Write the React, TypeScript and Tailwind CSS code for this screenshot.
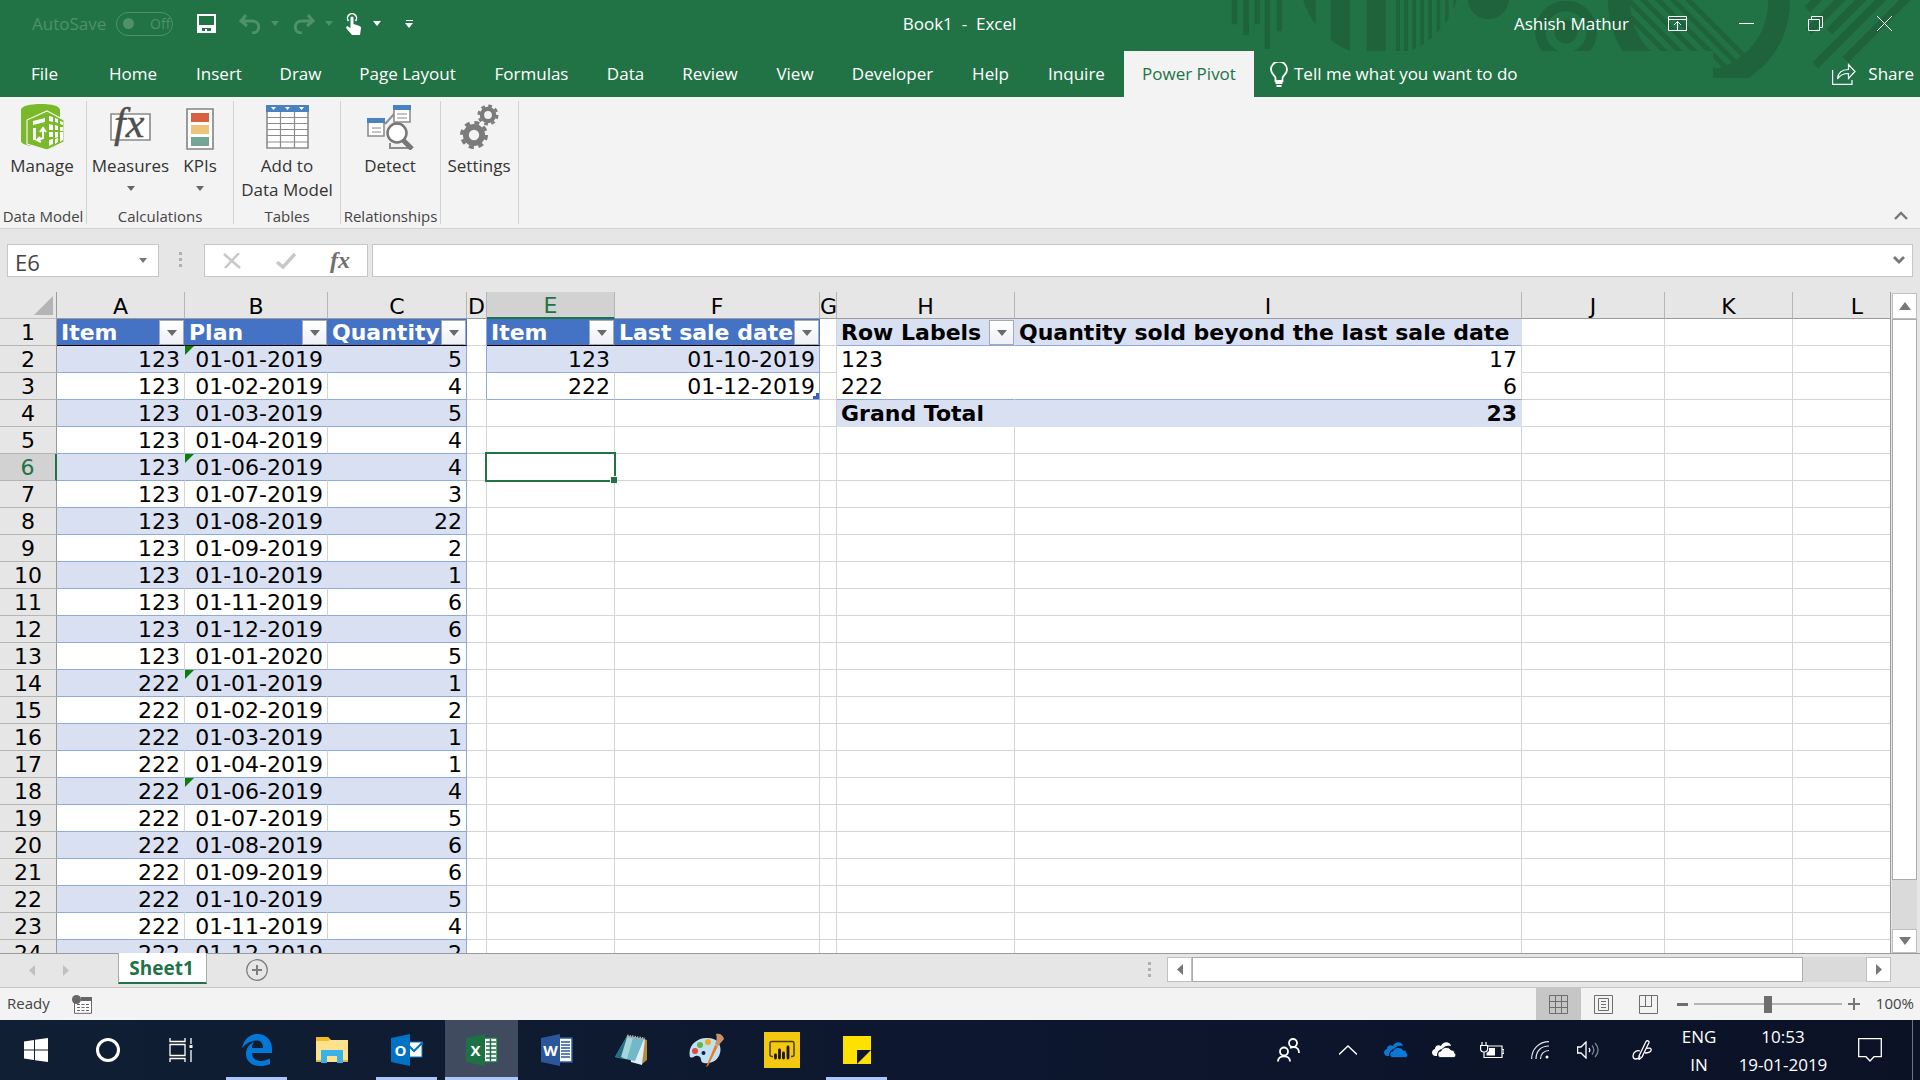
import { useState } from "react";
import type { ReactNode } from "react";
import clsx from "clsx";

const columns = [
  { name: "A", width: "w-[128px]" },
  { name: "B", width: "w-[143px]" },
  { name: "C", width: "w-[139px]" },
  { name: "D", width: "w-[20px]" },
  { name: "E", width: "w-[128px]" },
  { name: "F", width: "w-[205px]" },
  { name: "G", width: "w-[17px]" },
  { name: "H", width: "w-[178px]" },
  { name: "I", width: "w-[507px]" },
  { name: "J", width: "w-[143px]" },
  { name: "K", width: "w-[128px]" },
  { name: "L", width: "" },
];

const plan: [string, string, string][] = [
  ["123", "01-01-2019", "5"],
  ["123", "01-02-2019", "4"],
  ["123", "01-03-2019", "5"],
  ["123", "01-04-2019", "4"],
  ["123", "01-06-2019", "4"],
  ["123", "01-07-2019", "3"],
  ["123", "01-08-2019", "22"],
  ["123", "01-09-2019", "2"],
  ["123", "01-10-2019", "1"],
  ["123", "01-11-2019", "6"],
  ["123", "01-12-2019", "6"],
  ["123", "01-01-2020", "5"],
  ["222", "01-01-2019", "1"],
  ["222", "01-02-2019", "2"],
  ["222", "01-03-2019", "1"],
  ["222", "01-04-2019", "1"],
  ["222", "01-06-2019", "4"],
  ["222", "01-07-2019", "5"],
  ["222", "01-08-2019", "6"],
  ["222", "01-09-2019", "6"],
  ["222", "01-10-2019", "5"],
  ["222", "01-11-2019", "4"],
  ["222", "01-12-2019", "2"],
];

const cells: Record<string, string> = {
  A1: "Item",
  B1: "Plan",
  C1: "Quantity",
  E1: "Item",
  F1: "Last sale date",
  E2: "123",
  F2: "01-10-2019",
  E3: "222",
  F3: "01-12-2019",
  H1: "Row Labels",
  I1: "Quantity sold beyond the last sale date",
  H2: "123",
  I2: "17",
  H3: "222",
  I3: "6",
  H4: "Grand Total",
  I4: "23",
};

plan.forEach(([item, date, quantity], i) => {
  cells[`A${i + 2}`] = item;
  cells[`B${i + 2}`] = date;
  cells[`C${i + 2}`] = quantity;
});

const rows = Array.from({ length: 24 }, (_, i) => i + 1);
const filtered = ["A1", "B1", "C1", "E1", "F1", "H1"];
const flagged = ["B2", "B6", "B14", "B18"];

const tabs = [
  { name: "File", width: "w-[89px]" },
  { name: "Home", width: "w-[88px]" },
  { name: "Insert", width: "w-[84px]" },
  { name: "Draw", width: "w-[79px]" },
  { name: "Page Layout", width: "w-[135px]" },
  { name: "Formulas", width: "w-[113px]" },
  { name: "Data", width: "w-[75px]" },
  { name: "Review", width: "w-[94px]" },
  { name: "View", width: "w-[76px]" },
  { name: "Developer", width: "w-[119px]" },
  { name: "Help", width: "w-[77px]" },
  { name: "Inquire", width: "w-[95px]" },
  { name: "Power Pivot", width: "w-[130px]" },
];

function cellStyle(col: string, row: number) {
  const inPlan = "ABC".includes(col);
  const inSales = "EF".includes(col) && row <= 3;
  const inPivot = "HI".includes(col) && row <= 4;

  if (inPlan || inSales) {
    const last = col === "C" || col === "F";
    if (row === 1) {
      return "bg-[#4472c4] text-white font-bold border-b-black border-r-[#4472c4]";
    }
    if (row % 2 === 0) {
      return clsx(
        "bg-[#d9e0f2] border-b-[#8ea9db]",
        last ? "border-r-[#8ea9db]" : "border-r-[#d9e0f2]"
      );
    }
    return clsx(
      "bg-white border-b-[#8ea9db]",
      last ? "border-r-[#8ea9db]" : "border-r-[#d4d4d4]"
    );
  }
  if (inPivot) {
    if (row === 1) {
      return "bg-[#d9e0f2] font-bold border-b-[#8ea9db] border-r-[#d9e0f2]";
    }
    if (row === 4) {
      return "bg-[#d9e0f2] font-bold border-b-[#d9e0f2] border-r-[#d9e0f2]";
    }
    return clsx(
      "bg-white",
      row === 3 ? "border-b-[#8ea9db]" : "border-b-white",
      col === "I" ? "border-r-[#d4d4d4]" : "border-r-white"
    );
  }
  if (col === "D" && row <= 3) {
    return "bg-white border-b-[#d4d4d4] border-r-[#8ea9db]";
  }
  return "bg-white border-b-[#d4d4d4] border-r-[#d4d4d4]";
}

function Caret({ className }: { className?: string }) {
  return (
    <svg viewBox="0 0 8 5" className={clsx("h-[5px] w-2 shrink-0", className)}>
      <path d="M0 0h8L4 5z" fill="currentColor" />
    </svg>
  );
}

function HeaderPattern() {
  return (
    <svg
      viewBox="0 0 2100 234"
      className="absolute top-0 right-0 h-[78px] w-[700px]"
      aria-hidden="true"
    >
      <defs>
        <clipPath id="band">
          <path d="M0 0H2100V234H1479V153H0z" />
        </clipPath>
        <clipPath id="disc">
          <circle cx="480" cy="-71" r="241" />
        </clipPath>
        <clipPath id="ringInside">
          <circle cx="1437" cy="5" r="240" />
        </clipPath>
      </defs>
      <g clipPath="url(#band)" fill="#1e633c">
        <path d="M35 0h17v73H35zM70 0h17v106H70zM104 0h16v73h-16zM134 0h16v147h-16zM170 0h16v94h-16z" />
        <g clipPath="url(#disc)">
          <path d="M230 0h57v180h-57zM332 0h58v180h-58zM440 0h57v180h-57zM528 0h12v180h-12zM552 0h12v180h-12zM577 0h11v180h-11zM601 0h11v180h-11zM625 0h11v180h-11zM650 0h11v180h-11zM675 0h11v180h-11zM700 0h11v180h-11z" />
        </g>
        <circle cx="805" cy="-5" r="62" />
        <circle cx="1038" cy="95" r="77" fill="none" stroke="#1e633c" strokeWidth="31" />
        <circle cx="1038" cy="95" r="35" />
        <circle cx="1437" cy="5" r="240" fill="none" stroke="#1e633c" strokeWidth="66" />
        <g clipPath="url(#ringInside)" stroke="#1e633c" strokeWidth="15">
          <path d="M1180 0L1400 220M1215 -10L1440 215M1250 -20L1490 220M1295 -20L1520 205M1340 -20L1560 200M1385 -20L1590 185" />
        </g>
        <g stroke="#1e633c" strokeWidth="24">
          <path d="M1762 28L1800 -10M1765 95L1870 -10M1828 95L1935 -12M1786 196L1992 -10M1876 179L2075 -20" />
        </g>
      </g>
    </svg>
  );
}

function TitleBar() {
  const [autoSave, setAutoSave] = useState(false);

  return (
    <div className="relative grid h-[51px] grid-cols-[1fr_auto_1fr] items-center pr-px pb-1 text-[17px] text-white">
      <div className="flex items-center pl-8">
        <label className="flex items-center gap-2 text-[#4f9169]">
          <span className="w-[76px]">AutoSave</span>
          <input
            type="checkbox"
            className="sr-only"
            checked={autoSave}
            onChange={() => setAutoSave(!autoSave)}
          />
          <span className="flex h-6 w-[57px] items-center gap-4 rounded-full border border-[#4f9169] pl-1.5 text-sm">
            <span className="h-[11px] w-[11px] rounded-full bg-[#4f9169]" />
            Off
          </span>
        </label>
        <button className="ml-6" aria-label="Save">
          <svg viewBox="0 0 19 19" className="h-[19px] w-[19px]">
            <path d="M1 1h17v17H1z" fill="none" stroke="#fff" strokeWidth="2" />
            <path d="M1 11h17v7h-4v-4H5v4H1z" fill="#fff" />
            <path d="M8 15h2v4H8z" fill="#fff" />
          </svg>
        </button>
        <button className="ml-[23px] text-[#4f9169]" aria-label="Undo">
          <svg viewBox="0 0 22 20" className="h-5 w-[22px]">
            <path d="M7 1L2 7l6 5M2 7h11c9 0 9 12 0 12" fill="none" stroke="currentColor" strokeWidth="3" />
          </svg>
        </button>
        <button className="ml-2.5 text-[#4f9169]" aria-label="Undo list">
          <Caret />
        </button>
        <button className="ml-3.5 text-[#4f9169]" aria-label="Redo">
          <svg viewBox="0 0 22 20" className="h-5 w-[22px]">
            <path d="M15 1l5 6-6 5M20 7H9c-9 0-9 12 0 12" fill="none" stroke="currentColor" strokeWidth="3" />
          </svg>
        </button>
        <button className="ml-2.5 text-[#4f9169]" aria-label="Redo list">
          <Caret />
        </button>
        <button className="ml-3" aria-label="Touch mode">
          <svg viewBox="0 0 16 22" className="h-[22px] w-4">
            <path d="M3.500 8a4.500 4.500 0 1 1 7 0" fill="none" stroke="#fff" strokeWidth="1.500" />
            <path d="M5.500 5a1.500 1.500 0 0 1 3 0v6l6 2c1 .5 1.500 1 1.500 2l-1 7H7L1 15l1-2 3.500 2z" fill="#fff" />
          </svg>
        </button>
        <button className="ml-3" aria-label="Touch mode list">
          <Caret />
        </button>
        <button className="ml-6 flex flex-col items-center gap-0.5" aria-label="Customize toolbar">
          <span className="h-px w-[7px] bg-white" />
          <Caret />
        </button>
      </div>
      <h1 className="whitespace-pre">Book1  -  Excel</h1>
      <div className="flex items-center justify-end">
        <span className="mr-3.5">Ashish Mathur</span>
        <button className="flex w-[69px] justify-center" aria-label="Ribbon display options">
          <svg viewBox="0 0 19 15" className="h-[15px] w-[19px]" fill="none" stroke="#fff">
            <path d="M.5.500h18v14H.5zM.5 3.500h18M9.500 14V5.500M6 9l3.500-3.500L13 9" />
          </svg>
        </button>
        <button className="flex w-[69px] justify-center" aria-label="Minimize">
          <span className="h-px w-[15px] bg-white" />
        </button>
        <button className="flex w-[69px] justify-center" aria-label="Restore">
          <svg viewBox="0 0 15 15" className="h-[15px] w-[15px]" fill="none" stroke="#fff">
            <path d="M.5 3.500h11v11H.5zM3.500 3.500v-3h11v11h-3" />
          </svg>
        </button>
        <button className="flex w-[69px] justify-center" aria-label="Close">
          <svg viewBox="0 0 15 15" className="h-[15px] w-[15px]" fill="none" stroke="#fff">
            <path d="M0 0l15 15M15 0L0 15" />
          </svg>
        </button>
      </div>
    </div>
  );
}

function TabStrip() {
  return (
    <div className="relative flex h-[46px] items-stretch text-[17px] text-white">
      {tabs.map((tab) => (
        <button
          key={tab.name}
          className={clsx(
            "shrink-0 whitespace-nowrap",
            tab.width,
            tab.name === "Power Pivot" && "bg-[#f3f3f3] text-[#217346]"
          )}
        >
          {tab.name}
        </button>
      ))}
      <button className="ml-4 flex items-center gap-1.5">
        <svg viewBox="0 0 18 25" className="h-[25px] w-[18px]" fill="none" stroke="#fff" strokeWidth="1.800">
          <path d="M5.500 19v-3c0-2-4.500-4-4.500-8.500a8 8 0 0 1 16 0C17 12 12.500 14 12.500 16v3zM5.500 21h7M6.500 24h5" />
        </svg>
        <span>Tell me what you want to do</span>
      </button>
      <button className="ml-auto flex items-center gap-3 pr-1.5">
        <svg viewBox="0 0 24 22" className="h-[22px] w-6" fill="none" stroke="#fff" strokeWidth="1.200">
          <path d="M.6 7v14.400H20V17M5.500 16C6 9.500 10 6.500 16.500 6.500V1.500L23 8.500l-6.500 7v-5C12 10.500 8 12 5.500 16z" />
        </svg>
        <span>Share</span>
      </button>
    </div>
  );
}

function ManageIcon() {
  return (
    <svg viewBox="0 0 43 46" className="h-[46px] w-[43px]">
      <path d="M0 6C0 2 9 0 20 0s19 2 19 6v9H0zM0 6h9v36C4 41 0 39 0 37z" fill="#7ab929" />
      <path d="M6 16L26 7l17 9v22L26 46 6 40z" fill="#7ab929" stroke="#f3f3f3" strokeWidth="1.200" />
      <path d="M28 12l4 1v5l-4-1zM34 14l3 1v4l-3-1zM39 17l3 1v3l-3-1zM28 20l4 1v5h-4zM34 21l3 1v4h-3zM39 23h3v4h-3zM28 28h4v5h-4zM34 28h3v5l-3 1zM39 28h3v5l-3 1zM28 36l4-1v5l-4 2zM34 35l3-1v4l-3 2zM39 34l3-1v3l-3 2z" fill="#fff" />
      <path d="M12 17l12-3v4l-12 3zM12 24h3v12h-3z" fill="#fff" />
      <path d="M22 25v9l-5 2M19 28l3-4 3 4M19 33l-3 3 4 2" fill="none" stroke="#fff" strokeWidth="2" />
    </svg>
  );
}

function MeasuresIcon() {
  return (
    <svg viewBox="0 0 44 46" className="h-[46px] w-11 overflow-visible">
      <path d="M2 10h39v26H2z" fill="#fff" stroke="#8a8a8a" strokeWidth="1.600" />
      <text x="5" y="33" fill="#4f4f4f" stroke="#4f4f4f" strokeWidth=".4" fontSize="42" fontStyle="italic" fontFamily="Liberation Serif, serif">
        fx
      </text>
    </svg>
  );
}

function KpiIcon() {
  return (
    <svg viewBox="0 0 28 46" className="h-[46px] w-7">
      <path d="M1 5h26v40H1z" fill="#fff" stroke="#828282" strokeWidth="1.600" />
      <path d="M5 9h18v9H5z" fill="#d9603f" />
      <path d="M5 21h18v9H5z" fill="#eec578" />
      <path d="M5 33h18v9H5z" fill="#74a595" />
    </svg>
  );
}

function TableIcon() {
  return (
    <svg viewBox="0 0 43 46" className="h-[46px] w-[43px]">
      <path d="M1 2h41v42H1z" fill="#fff" stroke="#8c8c8c" strokeWidth="1.600" />
      <path d="M1 13.500h41M1 19.500h41M1 25.500h41M1 31.500h41M1 38h41M14.500 8v36M28.500 8v36" stroke="#8c8c8c" strokeWidth="1.200" />
      <path d="M0 1h43v7H0z" fill="#4a82bf" />
      <path d="M5 3h5L7.500 6zM19 3h5l-2.500 3zM33 3h5l-2.500 3z" fill="#fff" />
    </svg>
  );
}

function DetectIcon() {
  return (
    <svg viewBox="0 0 47 46" className="h-[46px] w-[47px]">
      <path d="M18 20L28 9M23 39v5h20" fill="none" stroke="#8c8c8c" strokeWidth="2" />
      <path d="M27 2h16v16H27zM1 15h16v17H1z" fill="#fff" stroke="#8c8c8c" strokeWidth="1.600" />
      <path d="M26 1h18v5H26zM0 14h18v5H0z" fill="#4a82bf" />
      <path d="M30 10h10M30 14h10M5 24h9M5 28h9" stroke="#b0b0b0" strokeWidth="1.500" />
      <path d="M36 36l9 9" stroke="#777" strokeWidth="5" />
      <circle cx="30" cy="29" r="9.500" fill="#fff" stroke="#777" strokeWidth="2.500" />
    </svg>
  );
}

function Gear({ x, y, r }: { x: number; y: number; r: number }) {
  return (
    <g stroke="#7b7b7b" fill="none">
      <circle cx={x} cy={y} r={r * 0.58} strokeWidth={r * 0.42} />
      <circle cx={x} cy={y} r={r * 0.88} strokeWidth={r * 0.24} strokeDasharray={`${r * 0.36} ${r * 0.331}`} />
    </g>
  );
}

function RibbonGroup({
  caption,
  width,
  children,
}: {
  caption: string;
  width: string;
  children: ReactNode;
}) {
  return (
    <section className={clsx("flex shrink-0 flex-col border-r border-[#d2d2d2]", width)}>
      <div className="flex flex-1 items-start">{children}</div>
      <h2 className="h-4 text-center text-[15px] leading-4 whitespace-nowrap text-[#444]">{caption}</h2>
    </section>
  );
}

function RibbonButton({
  icon,
  label,
  width,
  menu,
}: {
  icon: ReactNode;
  label: string;
  width: string;
  menu?: boolean;
}) {
  return (
    <button className={clsx("flex flex-col items-center pt-[3px]", width)}>
      {icon}
      <span className="mt-1 text-[17px] leading-6 whitespace-pre-line text-[#333]">{label}</span>
      {menu && <Caret className="mt-2 text-[#666]" />}
    </button>
  );
}

function Ribbon() {
  return (
    <div className="relative flex h-[132px] border-b border-[#d2d2d2] bg-[#f3f3f3] py-1">
      <RibbonGroup caption="Data Model" width="w-[87px]">
        <RibbonButton icon={<ManageIcon />} label="Manage" width="w-[84px]" />
      </RibbonGroup>
      <RibbonGroup caption="Calculations" width="w-[147px]">
        <RibbonButton icon={<MeasuresIcon />} label="Measures" width="w-[87px]" menu />
        <RibbonButton icon={<KpiIcon />} label="KPIs" width="w-[52px]" menu />
      </RibbonGroup>
      <RibbonGroup caption="Tables" width="w-[107px]">
        <RibbonButton icon={<TableIcon />} label={"Add to\nData Model"} width="w-[106px]" />
      </RibbonGroup>
      <RibbonGroup caption="Relationships" width="w-[100px]">
        <RibbonButton icon={<DetectIcon />} label="Detect" width="w-[98px]" />
      </RibbonGroup>
      <RibbonGroup caption="" width="w-[78px]">
        <RibbonButton
          icon={
            <svg viewBox="0 0 40 46" className="h-[46px] w-10">
              <Gear x={15} y={31} r={14} />
              <Gear x={29} y={11} r={10.5} />
            </svg>
          }
          label="Settings"
          width="w-[76px]"
        />
      </RibbonGroup>
      <button className="mt-auto mr-3 mb-1 ml-auto" aria-label="Collapse the ribbon">
        <svg viewBox="0 0 14 9" className="h-[9px] w-3.5">
          <path d="M1 8l6-6 6 6" fill="none" stroke="#777" strokeWidth="2.400" />
        </svg>
      </button>
    </div>
  );
}

function FormulaBar() {
  return (
    <div className="flex h-[63px] shrink-0 items-start bg-[#e6e6e6] pt-[15px] pr-[7px] pl-[7px] text-[#444]">
      <div className="flex h-[33px] w-[152px] shrink-0 items-center border border-[#c6c6c6] bg-white pr-[11px]">
        <input
          aria-label="Name box"
          defaultValue="E6"
          className="min-w-0 flex-1 bg-transparent pt-0.5 pl-[7px] text-[22px] leading-7 outline-none"
        />
        <Caret className="text-[#777]" />
      </div>
      <span className="mt-2 ml-[20px] flex flex-col gap-[3px]">
        <span className="h-[3px] w-[3px] bg-[#b0b0b0]" />
        <span className="h-[3px] w-[3px] bg-[#b0b0b0]" />
        <span className="h-[3px] w-[3px] bg-[#b0b0b0]" />
      </span>
      <div className="ml-[22px] flex h-[33px] w-[164px] shrink-0 items-center justify-between border border-[#c6c6c6] bg-white pr-[17px] pl-[18px]">
        <button aria-label="Cancel">
          <svg viewBox="0 0 18 16" className="h-4 w-[18px]">
            <path d="M1 1l16 14M16 0L2 15" stroke="#c8c8c8" strokeWidth="2.500" />
          </svg>
        </button>
        <button aria-label="Enter">
          <svg viewBox="0 0 20 16" className="h-4 w-5">
            <path d="M1 9l6 5L19 1" fill="none" stroke="#c8c8c8" strokeWidth="3.500" />
          </svg>
        </button>
        <button
          aria-label="Insert function"
          className="pb-0.5 font-['Liberation_Serif',serif] text-2xl leading-7 font-bold text-[#707070] italic"
        >
          fx
        </button>
      </div>
      <div className="ml-1 flex h-[33px] flex-1 items-center border border-[#c6c6c6] bg-white pr-[7px]">
        <input aria-label="Formula" className="min-w-0 flex-1 bg-transparent px-2 text-[22px] leading-7 outline-none" />
        <button aria-label="Expand formula bar">
          <svg viewBox="0 0 12 9" className="h-[9px] w-3">
            <path d="M1 1l5 5 5-5" fill="none" stroke="#777" strokeWidth="2.800" />
          </svg>
        </button>
      </div>
    </div>
  );
}

function Cell({ col, row }: { col: string; row: number }) {
  const id = `${col}${row}`;
  const value = cells[id];
  const left = row === 1 || col === "H";

  return (
    <td
      className={clsx(
        "relative h-[27px] border-r border-b px-1 pt-0.5 leading-6 whitespace-nowrap",
        left ? "text-left" : "text-right",
        cellStyle(col, row)
      )}
    >
      {value}
      {filtered.includes(id) && (
        <button
          aria-label={`Filter ${value}`}
          className="absolute top-px right-0 flex h-[25px] w-[25px] items-center justify-center border border-[#a3abb8] bg-linear-to-b from-white to-[#eef0f4] text-[#6a6a6a]"
        >
          <svg viewBox="0 0 10 6" className="h-1.5 w-2.5">
            <path d="M0 0h10L5 6z" fill="currentColor" />
          </svg>
        </button>
      )}
      {flagged.includes(id) && (
        <svg viewBox="0 0 9 9" className="absolute top-0 left-0 h-[9px] w-[9px]">
          <path d="M0 0h9L0 9z" fill="#0a7d0a" />
        </svg>
      )}
      {id === "F3" && (
        <svg viewBox="0 0 6 6" className="absolute right-0 bottom-0 h-1.5 w-1.5">
          <path d="M3 0h3v6H0V3h3z" fill="#3f5db5" />
        </svg>
      )}
      {id === "E6" && (
        <span className="absolute -top-0.5 -right-0.5 -bottom-0.5 -left-0.5 z-10 border-2 border-[#217346]">
          <span className="absolute -right-[3px] -bottom-[3px] h-[7px] w-[7px] border-t border-l border-white bg-[#217346]" />
        </span>
      )}
    </td>
  );
}

function ScrollArrow({ flip }: { flip?: boolean }) {
  return (
    <svg viewBox="0 0 12 8" className={clsx("h-2 w-3", flip && "rotate-180")}>
      <path d="M0 0h12L6 8z" fill="currentColor" />
    </svg>
  );
}

function Sheet() {
  return (
    <div className="flex min-h-0 flex-1 bg-[#e6e6e6]">
      <div className="min-w-0 flex-1 overflow-hidden border-r border-[#9b9b9b]">
        <table className="w-[1922px] min-w-full table-fixed border-separate border-spacing-0 font-['DejaVu_Sans',Verdana,sans-serif] text-[22px] text-black">
          <colgroup>
            <col className="w-[57px]" />
            {columns.map((col) => (
              <col key={col.name} className={col.width} />
            ))}
          </colgroup>
          <thead>
            <tr>
              <th className="h-[27px] border-r border-b border-r-[#9b9b9b] border-b-[#c0c0c0] p-0">
                <svg viewBox="0 0 19 19" className="mt-px mr-[3px] ml-auto h-[19px] w-[19px]">
                  <path d="M19 0v19H0z" fill="#b4b4b4" />
                </svg>
              </th>
              {columns.map((col) => (
                <th
                  key={col.name}
                  className={clsx(
                    "h-[27px] overflow-hidden border-r p-0 text-center font-normal",
                    col.name === "E"
                      ? "border-b-2 border-r-[#b5b5b5] border-b-[#217346] bg-[#d2d2d2] pt-[3px] leading-[22px] text-[#217346]"
                      : "border-b border-r-[#b5b5b5] border-b-[#9b9b9b] pt-1 leading-[22px]"
                  )}
                >
                  {col.name}
                </th>
              ))}
            </tr>
          </thead>
          <tbody>
            {rows.map((row) => (
              <tr key={row}>
                <th
                  className={clsx(
                    "h-[27px] border-b border-b-[#b5b5b5] p-0 pt-0.5 text-center leading-6 font-normal",
                    row === 6
                      ? "border-r-2 border-r-[#217346] bg-[#d2d2d2] text-[#217346]"
                      : "border-r border-r-[#9b9b9b]"
                  )}
                >
                  {row}
                </th>
                {columns.map((col) => (
                  <Cell key={col.name} col={col.name} row={row} />
                ))}
              </tr>
            ))}
          </tbody>
        </table>
      </div>
      <div className="flex w-[29px] flex-col pt-px pr-[3px] pl-px">
        <button className="flex h-[26px] shrink-0 items-center justify-center border border-[#c0c0c0] bg-white text-[#777]" aria-label="Scroll up">
          <ScrollArrow flip />
        </button>
        <div className="flex flex-1 flex-col bg-[#dadada]">
          <div className="h-[92%] border border-[#ababab] bg-white" />
        </div>
        <button className="flex h-6 shrink-0 items-center justify-center border border-[#c0c0c0] bg-white text-[#777]" aria-label="Scroll down">
          <ScrollArrow />
        </button>
      </div>
    </div>
  );
}

function SideArrow({ flip, className }: { flip?: boolean; className?: string }) {
  return (
    <svg viewBox="0 0 6 11" className={clsx("h-[11px] w-1.5", flip && "rotate-180", className)}>
      <path d="M6 0v11L0 5.500z" fill="currentColor" />
    </svg>
  );
}

function SheetTabs() {
  return (
    <div className="flex h-[35px] shrink-0 items-start border-t border-b border-t-[#9b9b9b] border-b-[#c6c6c6] bg-[#e6e6e6]">
      <button className="mt-[11px] ml-[29px] text-[#c0c0c0]" aria-label="Previous sheet">
        <SideArrow />
      </button>
      <button className="mt-[11px] ml-7 text-[#c0c0c0]" aria-label="Next sheet">
        <SideArrow flip />
      </button>
      <button className="-mt-px ml-[49px] h-[31px] w-[89px] border-x border-b-2 border-x-[#ababab] border-b-[#217346] bg-white pr-0.5 text-[19px] leading-7 font-bold text-[#217346]">
        Sheet1
      </button>
      <button className="mt-[5px] ml-[39px]" aria-label="New sheet">
        <svg viewBox="0 0 22 22" className="h-[22px] w-[22px]" fill="none" stroke="#7d7d7d">
          <circle cx="11" cy="11" r="10.300" strokeWidth="1.200" />
          <path d="M11 6v10M6 11h10" strokeWidth="2" />
        </svg>
      </button>
      <div className="mt-[3px] mr-[29px] ml-auto flex h-[25px] w-[743px] items-center">
        <span className="mr-4 flex flex-col gap-[3px]">
          <span className="h-[3px] w-[3px] bg-[#b0b0b0]" />
          <span className="h-[3px] w-[3px] bg-[#b0b0b0]" />
          <span className="h-[3px] w-[3px] bg-[#b0b0b0]" />
        </span>
        <button className="flex h-[25px] w-[25px] items-center justify-center border border-[#c0c0c0] bg-white text-[#777]" aria-label="Scroll left">
          <SideArrow />
        </button>
        <div className="flex h-[25px] flex-1 bg-[#dadada]">
          <div className="w-[611px] border border-[#ababab] bg-white" />
        </div>
        <button className="flex h-[25px] w-[25px] items-center justify-center border border-[#c0c0c0] bg-white text-[#777]" aria-label="Scroll right">
          <SideArrow flip />
        </button>
      </div>
    </div>
  );
}

function StatusBar() {
  return (
    <div className="flex h-8 shrink-0 items-center bg-[#f3f3f3] pr-1.5 pl-[7px] text-[15px] text-[#444]">
      <span className="w-[65px] pb-0.5">Ready</span>
      <button aria-label="Record macro">
        <svg viewBox="0 0 20 19" className="h-[19px] w-5">
          <path d="M2.500 6v12.300h17V5" fill="#fff" stroke="#666" />
          <path d="M9 2h11v4H9z" fill="#666" />
          <circle cx="4.500" cy="4.500" r="4.500" fill="#666" />
          <path d="M5 9.500h12M5 12.500h12M5 15.500h12" stroke="#666" strokeDasharray="3 1.500" />
        </svg>
      </button>
      <div className="ml-auto flex h-full items-center">
        <button className="flex h-full w-[45px] items-center justify-center bg-[#c6c6c6]" aria-label="Normal view">
          <svg viewBox="0 0 19 19" className="h-[19px] w-[19px]" fill="none" stroke="#6e6e6e">
            <path d="M.5.500h18v18H.5zM6.500 0v19M12.500 0v19M0 6.500h19M0 12.500h19" />
          </svg>
        </button>
        <button className="flex h-full w-[45px] items-center justify-center" aria-label="Page layout view">
          <svg viewBox="0 0 19 19" className="h-[19px] w-[19px]" fill="none" stroke="#6e6e6e">
            <path d="M.5.500h18v18H.5zM4.500 3.500h10v12h-10zM7 6.500h5M7 9.500h5M7 12.500h5" />
          </svg>
        </button>
        <button className="flex h-full w-[45px] items-center justify-center" aria-label="Page break preview">
          <svg viewBox="0 0 19 19" className="h-[19px] w-[19px]" fill="none" stroke="#6e6e6e">
            <path d="M.5.500h18v18H.5zM6.500 0v11M12.500 0v11M0 11.500h13" />
          </svg>
        </button>
        <button className="ml-1.5 h-[3px] w-[11px] bg-[#6e6e6e]" aria-label="Zoom out" />
        <input
          type="range"
          aria-label="Zoom"
          min={10}
          max={190}
          defaultValue={100}
          className="mx-1.5 h-[17px] w-[148px] appearance-none bg-[linear-gradient(#b5b5b5,#b5b5b5)] bg-[length:100%_2px] bg-center bg-no-repeat [&::-webkit-slider-thumb]:h-[17px] [&::-webkit-slider-thumb]:w-2 [&::-webkit-slider-thumb]:appearance-none [&::-webkit-slider-thumb]:bg-[#6e6e6e]"
        />
        <button aria-label="Zoom in">
          <svg viewBox="0 0 12 12" className="h-3 w-3">
            <path d="M6 0v12M0 6h12" stroke="#777" strokeWidth="2" />
          </svg>
        </button>
        <span className="w-[54px] pb-0.5 text-right">100%</span>
      </div>
    </div>
  );
}

function OfficeIcon({ letter, color, children }: { letter: string; color: string; children: ReactNode }) {
  return (
    <svg viewBox="0 0 32 32" className="h-8 w-8">
      {children}
      <path d="M0 4L19 0v32L0 28z" fill={color} />
      <text x="9.500" y="21.500" fill="#fff" fontSize="15" fontWeight="700" textAnchor="middle" fontFamily="Open Sans, sans-serif">
        {letter}
      </text>
    </svg>
  );
}

const apps: { name: string; state?: "open" | "active"; icon: ReactNode }[] = [
  {
    name: "Edge",
    state: "open",
    icon: (
      <svg viewBox="0 0 30 32" className="h-8 w-[30px]">
        <path d="M0 14C2 5 8 0 15.500 0 25 0 30 7 30 15v4H10c0 6 5 8 9 8 3 0 6-1 9-2.500V30c-3 1.500-7 2-10 2C9 32 4 26.500 4 20c0-6 3.500-10 8-12-1.500 2-2 4-2 6h11c0-5-2-7.500-6.500-7.500C9 6.500 4 9.500 0 14z" fill="#0478d7" />
      </svg>
    ),
  },
  {
    name: "File Explorer",
    icon: (
      <svg viewBox="0 0 32 28" className="h-7 w-8">
        <path d="M0 1h12l3 3h17v22H0z" fill="#fde28d" />
        <path d="M0 1h12l2 3-2 1H0z" fill="#f5b921" />
        <path d="M5 14h22v13h-6v-7H11v7H5z" fill="#38b2e8" />
        <path d="M0 24h5v2H0zM27 24h5v2h-5z" fill="#e9b63c" />
      </svg>
    ),
  },
  {
    name: "Outlook",
    state: "open",
    icon: (
      <OfficeIcon letter="O" color="#0072c6">
        <path d="M17 8h14v15H17z" fill="#fff" stroke="#0072c6" />
        <path d="M18 12l5 5 9-9" fill="none" stroke="#0072c6" strokeWidth="2" />
      </OfficeIcon>
    ),
  },
  {
    name: "Excel",
    state: "active",
    icon: (
      <OfficeIcon letter="X" color="#1e7145">
        <path d="M17 4h14v24H17z" fill="#fff" stroke="#1e7145" strokeWidth="1.500" />
        <path d="M20 8h10M20 12h10M20 16h10M20 20h10M20 24h10M24.500 5v22" stroke="#1e7145" strokeWidth="1.500" />
      </OfficeIcon>
    ),
  },
  {
    name: "Word",
    icon: (
      <OfficeIcon letter="W" color="#2b579a">
        <path d="M17 4h14v24H17z" fill="#fff" stroke="#2b579a" strokeWidth="1.500" />
        <path d="M20 8h9M20 11h9M20 14h9M20 17h9M20 20h9M20 23h9" stroke="#2b579a" strokeWidth="1.300" />
      </OfficeIcon>
    ),
  },
  {
    name: "Notepad",
    icon: (
      <svg viewBox="0 0 34 32" className="h-8 w-[34px]">
        <path d="M29 5l3 1v20l-5 4z" fill="#b48a3c" />
        <path d="M12 2l18 3-3 26-11-3z" fill="#dfeef2" />
        <path d="M12 2l17 3-9 22L0 23z" fill="#72b8c6" />
        <path d="M12 2L0 23l8 2 4-14z" fill="#236e82" />
        <path d="M12 3l6 1-6 21-6-2z" fill="#a5d5dd" />
        <path d="M12 2l18 3" stroke="#aaa" strokeWidth="3" strokeDasharray="1.500 1" />
      </svg>
    ),
  },
  {
    name: "Paint",
    icon: (
      <svg viewBox="0 0 35 34" className="h-[34px] w-[35px]">
        <path d="M1 24C-2 12 9 4 19 5c10 0 14 8 12 15-2 8-9 11-16 10-5-1-1-6-6-7-4-1-4 3-8 1z" fill="#bfe0f5" />
        <circle cx="6" cy="18" r="3" fill="#e3483c" />
        <circle cx="11" cy="12" r="3" fill="#5fb944" />
        <circle cx="19" cy="9" r="3" fill="#f2a91e" />
        <circle cx="14.500" cy="20" r="2" fill="#12203a" />
        <path d="M26 12l3 1-10 20-2 1z" fill="#e87d1e" />
        <path d="M27 1c4-1 7 1 8 5l-6 7-3-2c2-4 2-7 1-10z" fill="#c79367" />
      </svg>
    ),
  },
  {
    name: "Power BI",
    icon: (
      <svg viewBox="0 0 36 36" className="h-9 w-9">
        <path d="M0 0h36v36H0z" fill="#f2c811" />
        <path d="M9 24.500H8a2 2 0 0 1-2-2v-11a2 2 0 0 1 2-2h20a2 2 0 0 1 2 2v11a2 2 0 0 1-2 2h-1" fill="none" stroke="#4d3f06" strokeWidth="1.500" />
        <path d="M11.500 26v-3M15.500 26v-8M19.500 26v-5M24 26V15" stroke="#1c1702" strokeWidth="2.800" strokeLinecap="round" />
      </svg>
    ),
  },
  {
    name: "Sticky Notes",
    state: "open",
    icon: (
      <svg viewBox="0 0 28 28" className="h-7 w-7">
        <path d="M0 0h28v28H0z" fill="#ffe100" />
        <path d="M14 28V14h14z" fill="#0d1830" />
      </svg>
    ),
  },
];

function TrayButton({ label, width, children }: { label: string; width: string; children: ReactNode }) {
  return (
    <button aria-label={label} className={clsx("flex h-full shrink-0 items-center justify-center", width)}>
      {children}
    </button>
  );
}

function Cloud({ className }: { className: string }) {
  return (
    <svg viewBox="0 0 24 16" className={clsx("h-4 w-6", className)} fill="currentColor">
      <path d="M5 14H3c-4-1-4-6 0-7 0-3 3-5 6-3 2-5 9-5 10 0-4-1-7 0-8 3-4 0-6 3-6 7z" />
      <path d="M8 15.500c-3-1-3-6 1-6.500 1-4 8-5 10-1 3 0 4 2 3.500 3 2 1 1.500 4-.5 4.500z" stroke="#0d1830" strokeWidth=".8" />
    </svg>
  );
}

function Taskbar() {
  return (
    <div className="flex h-[60px] shrink-0 items-stretch bg-linear-to-r from-[#101f33] via-[#0d172f] to-[#0b1226] text-[17px] text-white">
      <TrayButton label="Start" width="w-[72px]">
        <svg viewBox="0 0 24 24" className="h-6 w-6" fill="#fff">
          <path d="M0 3.500L10 2v9.500H0zM11 1.800L24 0v11.500H11zM0 12.500h10V22L0 20.500zM11 12.500h13V24l-13-1.800z" />
        </svg>
      </TrayButton>
      <TrayButton label="Cortana" width="w-[72px]">
        <span className="h-6 w-6 rounded-full border-3 border-white" />
      </TrayButton>
      <TrayButton label="Task view" width="w-[75px]">
        <svg viewBox="0 0 24 24" className="mr-0.5 h-6 w-6" fill="none" stroke="#fff" strokeWidth="1.300">
          <path d="M1 0v3.500h15V0M1 6.500h15v11H1zM1 24v-3.500h15V24M22 0v6M22 12v12" />
          <path d="M20.500 7h3v3h-3z" fill="#fff" stroke="none" />
        </svg>
      </TrayButton>
      {apps.map((app) => (
        <button
          key={app.name}
          aria-label={app.name}
          className="flex w-[75px] shrink-0 flex-col items-center"
        >
          <span
            className={clsx(
              "flex w-[73px] flex-1 items-center justify-center pt-[3px]",
              app.state === "active" && "bg-[#414b5f]"
            )}
          >
            {app.icon}
          </span>
          <span
            className={clsx(
              "h-[3px]",
              app.state === "active" && "w-[73px] bg-[#adc6fa]",
              app.state === "open" && "w-[61px] bg-[#adc6fa]"
            )}
          />
        </button>
      ))}
      <div className="ml-auto flex items-center">
        <TrayButton label="People" width="w-[69px]">
          <svg viewBox="0 0 24 24" className="mr-0.5 h-6 w-6" fill="none" stroke="#fff" strokeWidth="1.800">
            <circle cx="16" cy="5" r="4" />
            <circle cx="7" cy="13.500" r="4" />
            <path d="M1 23.500c0-7 12-7 12 0M13 10c4-2 9-1 9 5" />
          </svg>
        </TrayButton>
        <TrayButton label="Show hidden icons" width="w-12">
          <svg viewBox="0 0 18 10" className="h-2.5 w-[18px]" fill="none" stroke="#fff" strokeWidth="1.400">
            <path d="M0 9.500L9 1l9 8.500" />
          </svg>
        </TrayButton>
        <TrayButton label="OneDrive work" width="w-12">
          <Cloud className="text-[#0a78d6]" />
        </TrayButton>
        <TrayButton label="OneDrive personal" width="w-12">
          <Cloud className="text-white" />
        </TrayButton>
        <TrayButton label="Battery" width="w-12">
          <svg viewBox="0 0 24 17" className="h-[17px] w-6" fill="none" stroke="#fff" strokeWidth="1.200">
            <path d="M8 4h14v11.500H4v-5M22.500 7.500H24v4h-1.500M2 0v3M6 0v3M.6 3.500h7V7C7.500 9 5.500 10 4 10S.6 9 .6 7z" />
            <path d="M9 6h6v7.500H6.500V11L9 9z" fill="#fff" stroke="none" />
          </svg>
        </TrayButton>
        <TrayButton label="Network" width="w-12">
          <svg viewBox="0 0 18 18" className="h-[18px] w-[18px]" fill="none" stroke="#e5e8ee" strokeWidth="1.200">
            <path d="M.6 18C.6 8 8 .6 18 .6M5 18C5 10 10 5 18 5M9.500 18C9.500 13 13 9.500 18 9.500" />
            <circle cx="16" cy="16" r="1.500" fill="#fff" stroke="none" />
          </svg>
        </TrayButton>
        <TrayButton label="Volume" width="w-12">
          <svg viewBox="0 0 22 18" className="h-[18px] w-[22px]" fill="none" stroke="#fff" strokeWidth="1.300">
            <path d="M.6 6H4l5-5v16l-5-5H.6zM12 7c1 1.500 1 3 0 4" />
            <path d="M15 4.500c2.500 3 2.500 6 0 9M18 2c4 4.500 4 9.500 0 14" stroke="#7a8293" />
          </svg>
        </TrayButton>
        <TrayButton label="Ink workspace" width="w-[60px]">
          <svg viewBox="0 0 20 20" className="h-5 w-5" fill="none" stroke="#fff" strokeWidth="1.300">
            <path d="M7 16L14 1.500c1-1.500 3.500-.5 3 1L10 17l-3 2.500zM8 11c-3-1-7 1-7 5s5 4 7 0M13 13c3 0 7-1 6-4-1-2-3 0-4-1" />
          </svg>
        </TrayButton>
        <button className="w-[54px] pt-0.5 text-center leading-7">
          ENG
          <br />
          IN
        </button>
        <button className="w-[114px] pt-0.5 text-center leading-7">
          10:53
          <br />
          19-01-2019
        </button>
        <TrayButton label="Notifications" width="w-[60px]">
          <svg viewBox="0 0 24 24" className="h-6 w-6" fill="none" stroke="#fff" strokeWidth="1.300">
            <path d="M.7.700h22.600v18H16L12 23l-4-4.300H.7z" />
          </svg>
        </TrayButton>
        <button aria-label="Show desktop" className="ml-3 h-full w-2 border-l border-[#6c7482]" />
      </div>
    </div>
  );
}

export default function App() {
  return (
    <div className="flex h-screen flex-col overflow-hidden bg-[#e6e6e6] font-['Open_Sans','Segoe_UI',sans-serif]">
      <header className="relative shrink-0 bg-[#217346]">
        <HeaderPattern />
        <TitleBar />
        <TabStrip />
      </header>
      <Ribbon />
      <FormulaBar />
      <Sheet />
      <SheetTabs />
      <StatusBar />
      <Taskbar />
    </div>
  );
}
